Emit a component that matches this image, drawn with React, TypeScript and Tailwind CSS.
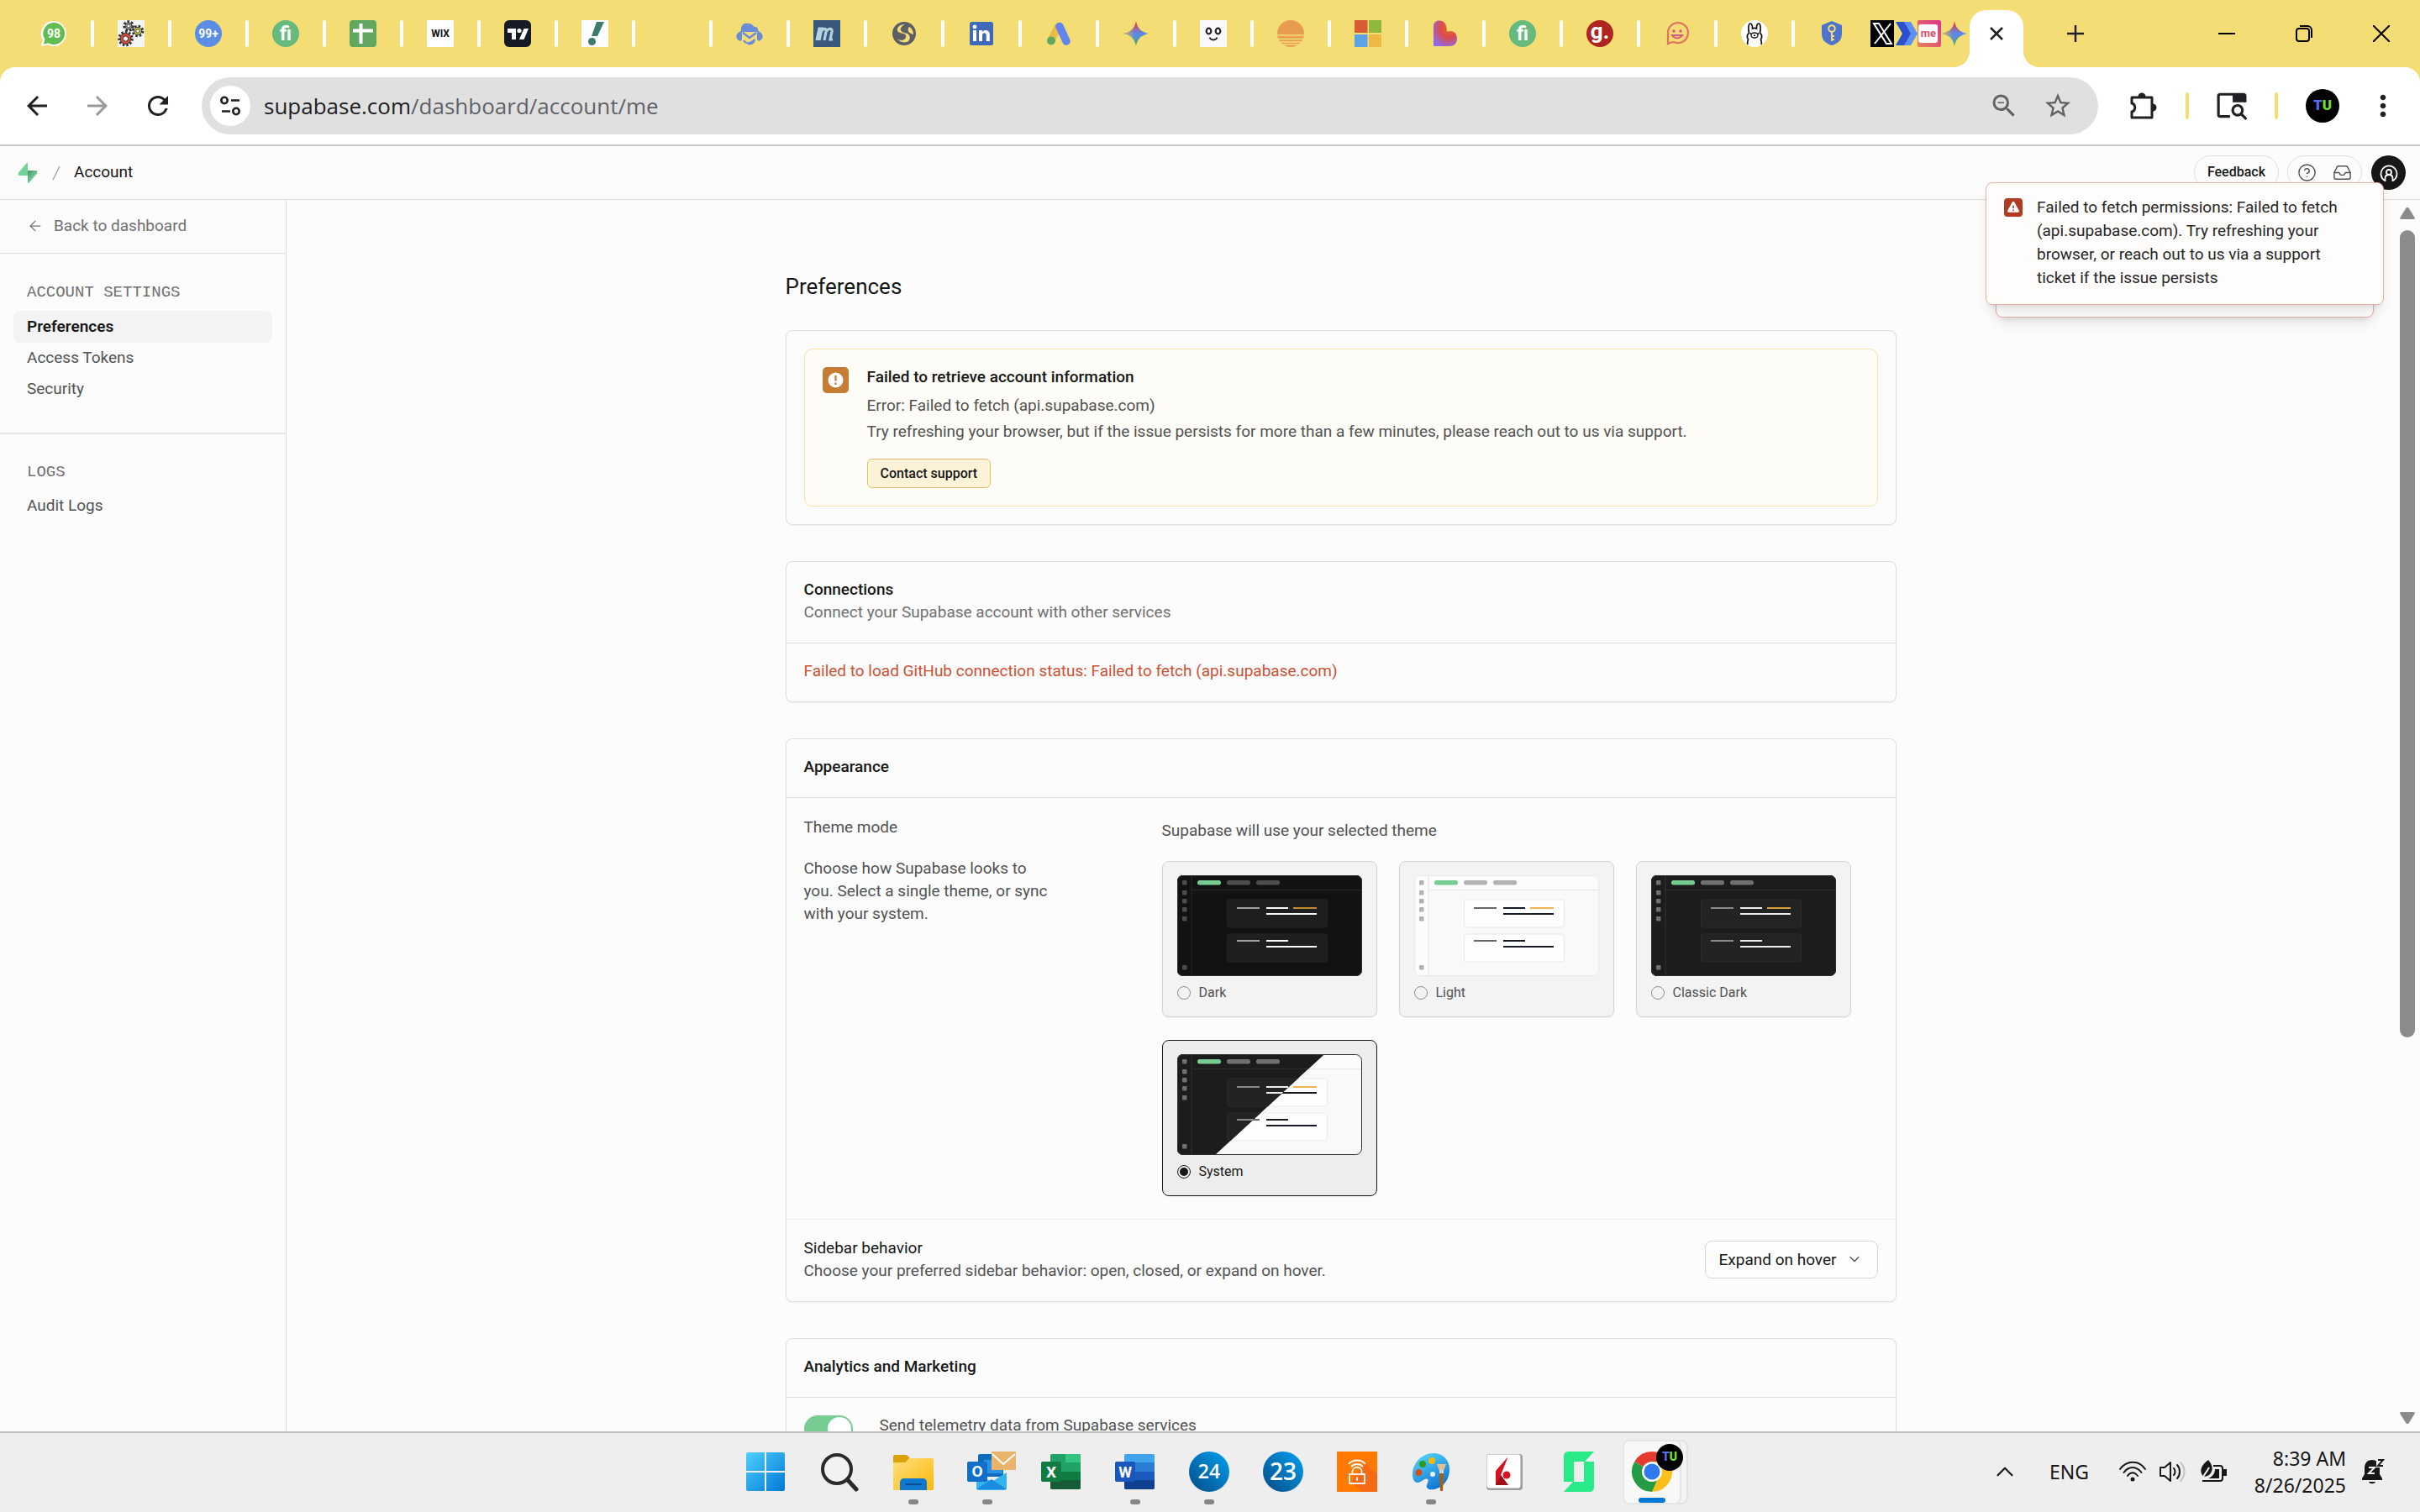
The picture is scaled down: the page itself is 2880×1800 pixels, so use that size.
import type { ReactNode } from "react";
import { ArrowLeft, ChevronDown, ChevronUp, HelpCircle, Inbox } from "lucide-react";
import {
  MdArrowBack,
  MdArrowForward,
  MdMoreVert,
  MdRefresh,
  MdStarOutline,
  MdZoomOut,
} from "react-icons/md";

/* ---------- tab favicons ---------- */

const Fav = ({ children }: { children?: ReactNode }) => (
  <svg viewBox="0 0 32 32" className="size-8 shrink-0" aria-hidden="true">
    {children}
  </svg>
);

const SvgText = ({ x = 16, y, size, fill = "#fff", children }: { x?: number; y: number; size: number; fill?: string; children: string }) => (
  <text x={x} y={y} fontSize={size} fill={fill} textAnchor="middle" fontFamily="Roboto" fontWeight="700">
    {children}
  </text>
);

const Gear = ({ cx, cy, r, fill }: { cx: number; cy: number; r: number; fill: string }) => (
  <g>
    <circle cx={cx} cy={cy} r={r} fill="none" stroke="#333" strokeWidth="3.5" strokeDasharray="2.4 1.9" />
    <circle cx={cx} cy={cy} r={r - 1} fill={fill} stroke="#333" strokeWidth="1" />
    <circle cx={cx} cy={cy} r={r / 2.4} fill="#f5f5f5" stroke="#333" strokeWidth="1" />
  </g>
);

const Fi = () => (
  <Fav>
    <circle cx="16" cy="16" r="16" fill="#66bb7c" />
    <SvgText x={16} y={24} size={23}>fi</SvgText>
  </Fav>
);

const Spark = () => (
  <Fav>
    <defs>
      <linearGradient id="spark" x1="0" y1="0" x2="0" y2="1">
        <stop offset="0.1" stopColor="#e0453f" />
        <stop offset="0.5" stopColor="#5b86f0" />
        <stop offset="1" stopColor="#4fae5f" />
      </linearGradient>
      <linearGradient id="sparkLeft" x1="0" y1="0" x2="1" y2="0">
        <stop offset="0" stopColor="#e5b93c" />
        <stop offset="0.45" stopColor="#e5b93c" stopOpacity="0" />
      </linearGradient>
    </defs>
    <path d="M16 1c1.500 8.500 6 13.200 15 15-9 1.800-13.500 6.500-15 15-1.500-8.500-6-13.200-15-15 9-1.800 13.500-6.500 15-15z" fill="url(#spark)" />
    <path d="M16 1c1.500 8.500 6 13.200 15 15-9 1.800-13.500 6.500-15 15-1.500-8.500-6-13.200-15-15 9-1.800 13.500-6.500 15-15z" fill="url(#sparkLeft)" />
  </Fav>
);

const tabs: { title: string; icon: ReactNode }[] = [
  {
    title: "WhatsApp",
    icon: (
      <Fav>
        <path d="M16 1a15 15 0 1 1-7 28.300L1 31l1.800-7.500A15 15 0 0 1 16 1z" fill="#fff" />
        <path d="M16 3a13 13 0 1 1-6.500 24.200L4 28.500l1.400-5.500A13 13 0 0 1 16 3z" fill="#61bd52" />
        <SvgText y={21} size={14}>98</SvgText>
      </Fav>
    ),
  },
  {
    title: "Gears",
    icon: (
      <Fav>
        <rect width="32" height="32" fill="#f5f5f5" />
        <Gear cx={13} cy={7} r={5} fill="#bbb" />
        <Gear cx={24} cy={13} r={5.500} fill="#e3dd4c" />
        <Gear cx={9.500} cy={22} r={7.500} fill="#d9483b" />
      </Fav>
    ),
  },
  {
    title: "Inbox",
    icon: (
      <Fav>
        <circle cx="16" cy="16" r="16" fill="#5b8de6" />
        <SvgText y={21} size={14}>99+</SvgText>
      </Fav>
    ),
  },
  { title: "Fiverr", icon: <Fi /> },
  {
    title: "Sheet",
    icon: (
      <Fav>
        <rect width="32" height="32" rx="4" fill="#62a75f" />
        <path d="M13.500 4v24M4 12.500h24" stroke="#fff" strokeWidth="4" />
      </Fav>
    ),
  },
  {
    title: "Wix",
    icon: (
      <Fav>
        <rect width="32" height="32" fill="#fff" />
        <SvgText y={20} size={12} fill="#111">WIX</SvgText>
      </Fav>
    ),
  },
  {
    title: "TradingView",
    icon: (
      <Fav>
        <rect width="32" height="32" rx="6" fill="#151a24" />
        <path d="M4 10h10v13H9v-8H4zM23.500 10H29l-5.500 13H18z" fill="#fff" />
        <circle cx="18" cy="12.500" r="2.600" fill="#fff" />
      </Fav>
    ),
  },
  {
    title: "Notice",
    icon: (
      <Fav>
        <rect width="32" height="32" fill="#fff" />
        <path d="M18 2h9l-8 17h-7z" fill="#3d7b70" />
        <circle cx="12.500" cy="25.500" r="4.500" fill="#3d7b70" />
      </Fav>
    ),
  },
  { title: "Blank", icon: <Fav /> },
  {
    title: "Mail assistant",
    icon: (
      <Fav>
        <path d="M6 13C5 7 9 3 13 4c5-1 7 3 9 4 4 0 5 3 4 5z" fill="#6a8dd9" />
        <path d="M7 12v11l-2 2c-6-2-6-9-1-11zM25 12v11l2 2c6-2 6-9 1-11z" fill="#6a8dd9" />
        <path d="M8 15l8 6 8-6" fill="none" stroke="#6a8dd9" strokeWidth="2.500" />
        <path d="M7 13h18" stroke="#6a8dd9" strokeWidth="2" />
        <path d="M9 24c3 5 9 4 13-1-1 4-4 6-8 5" fill="none" stroke="#6a8dd9" strokeWidth="2.200" />
      </Fav>
    ),
  },
  {
    title: "Moz",
    icon: (
      <Fav>
        <rect width="32" height="32" fill="#3a587c" />
        <path d="M4 24l3-14h3l-3 14m2-10c3-5 7-5 6 0l-2 10m2-10c3-5 8-5 7 0l-2 9h3" fill="none" stroke="#b5d3dd" strokeWidth="3.200" />
      </Fav>
    ),
  },
  {
    title: "Swirl",
    icon: (
      <Fav>
        <circle cx="16" cy="16" r="14" fill="#5c6064" />
        <path d="M17 5c-8 0-11 6-8 9 2 2 8 1 9 4s-2 6-5 6c-2 0-4-1-5-2 2 4 9 6 13 3 3-3 2-7-1-9-3-1-7-1-8-4-1-2 1-5 5-7zM22 8c4 2 5 6 5 9-2-1-5-1-6-4-1-2 0-4 1-5z" fill="#f4dd75" />
      </Fav>
    ),
  },
  {
    title: "LinkedIn",
    icon: (
      <Fav>
        <rect x="2" y="2" width="28" height="28" rx="2.500" fill="#4169ba" />
        <path d="M6 12h4v13H6zM13 12h3.800v2c2-3.300 9-3 9 3v8h-4v-7c0-4-4.800-3.500-4.800 0v7h-4z" fill="#fff" />
        <circle cx="8" cy="8" r="2.400" fill="#fff" />
      </Fav>
    ),
  },
  {
    title: "Google Ads",
    icon: (
      <Fav>
        <path d="M7 24 15 8" stroke="#e8bd43" strokeWidth="9" strokeLinecap="round" />
        <path d="M17 7.500 25 25" stroke="#6085ec" strokeWidth="9.500" strokeLinecap="round" />
        <circle cx="7" cy="24.500" r="5" fill="#62a75f" />
      </Fav>
    ),
  },
  { title: "Gemini", icon: <Spark /> },
  {
    title: "Face",
    icon: (
      <Fav>
        <rect width="32" height="32" fill="#fafafa" />
        <ellipse cx="10.500" cy="13" rx="2.800" ry="3.300" fill="#fff" stroke="#222" strokeWidth="2.200" />
        <ellipse cx="21.500" cy="13" rx="2.800" ry="3.300" fill="#fff" stroke="#222" strokeWidth="2.200" />
        <path d="M11.500 20.500c1.500 4 7.500 4 9 0" fill="none" stroke="#222" strokeWidth="1.800" />
      </Fav>
    ),
  },
  {
    title: "Sunset",
    icon: (
      <Fav>
        <circle cx="16" cy="16" r="16" fill="#e89c4f" />
        <path d="M0 18h32M0 22.500h32M0 26h32M4 29h24" stroke="#f4dd75" strokeWidth="1.600" />
      </Fav>
    ),
  },
  {
    title: "Microsoft",
    icon: (
      <Fav>
        <rect width="15.500" height="15" fill="#d95c33" />
        <rect x="17" width="15" height="15" fill="#8fb83d" />
        <rect y="17" width="15.500" height="15" fill="#5ba3e6" />
        <rect x="17" y="17" width="15" height="15" fill="#edb944" />
      </Fav>
    ),
  },
  {
    title: "Blob",
    icon: (
      <Fav>
        <defs>
          <radialGradient id="blob" cx="0.650" cy="0.300" r="0.800">
            <stop offset="0" stopColor="#e2702c" />
            <stop offset="0.450" stopColor="#dc4a4a" />
            <stop offset="1" stopColor="#8a6cf0" />
          </radialGradient>
        </defs>
        <path d="M2 31V7C2 3 5 .5 8.500.5c6 0 9.500 4 9.500 13 6-2 12 1 12 8.500 0 6-4 9-9 9z" fill="url(#blob)" />
      </Fav>
    ),
  },
  { title: "Fiverr inbox", icon: <Fi /> },
  {
    title: "Goodreads",
    icon: (
      <Fav>
        <circle cx="16" cy="16" r="16" fill="#ad2420" />
        <SvgText y={22} size={26}>g.</SvgText>
      </Fav>
    ),
  },
  {
    title: "Chat",
    icon: (
      <Fav>
        <path d="M5 28V16a12 12 0 1 1 7 10c-2 0-5 1-7 2z" fill="none" stroke="#e0745e" strokeWidth="2.200" />
        <circle cx="12" cy="13" r="1.800" fill="#d9597c" />
        <circle cx="20" cy="13" r="1.800" fill="#d9597c" />
        <path d="M10 18c3 4.500 9 4.500 12 0z" fill="none" stroke="#d9597c" strokeWidth="2" />
      </Fav>
    ),
  },
  {
    title: "Ollama",
    icon: (
      <Fav>
        <circle cx="16" cy="16" r="16" fill="#fff" />
        <path d="M8 29c-1-3 0-4 .5-6-2-3-1-6 1-8-1-4-1-11 1.500-11 2 0 2.500 3 2.500 6 2-1 3-1 5 0 0-3 .5-6 2.500-6 2.500 0 2.500 7 1.500 11 2 2 3 5 1 8 .5 2 1.500 3 .5 6" fill="none" stroke="#111" strokeWidth="1.700" />
        <ellipse cx="16" cy="18" rx="4" ry="3" fill="none" stroke="#111" strokeWidth="1.300" />
        <circle cx="11.500" cy="16" r="1" />
        <circle cx="20.500" cy="16" r="1" />
        <path d="M15 17.500h2v1.500h-2z" />
      </Fav>
    ),
  },
  {
    title: "Vault",
    icon: (
      <Fav>
        <path d="M16 1l12 5v10c0 8-5 12-12 14C9 28 4 24 4 16V6z" fill="#4d73cd" />
        <circle cx="16" cy="10" r="3.800" fill="none" stroke="#f4dd75" strokeWidth="2" />
        <path d="M16 14v11M16 19h3M16 23h3" stroke="#f4dd75" strokeWidth="2" />
      </Fav>
    ),
  },
];

/* ---------- browser chrome ---------- */

const TabStrip = () => (
  <div className="flex h-20 items-center pl-5">
    {tabs.map((tab, i) => (
      <div key={tab.title} className="flex h-8 shrink-0 items-center">
        <button type="button" aria-label={tab.title} className="flex w-[88px] justify-center">
          {tab.icon}
        </button>
        {i < tabs.length - 1 && <span className="h-8 w-1 rounded-sm bg-white" />}
      </div>
    ))}
    <div className="flex h-8 w-[120px] items-center pl-[2px]">
      <div className="w-7 overflow-hidden">
        <Fav>
          <rect width="32" height="32" fill="#000" />
          <path d="M4 4h6l15 24h-6zM24 4 5 28" fill="none" stroke="#fff" strokeWidth="2" />
        </Fav>
      </div>
      <div className="w-7 overflow-hidden">
        <Fav>
          <path d="M2 2h16l8 14-8 14H2l8-14z" fill="#2c50cf" />
          <path d="M12 2h8l8 14-8 14h-8l8-14z" fill="#5d8ef2" />
        </Fav>
      </div>
      <div className="w-7 overflow-hidden">
        <Fav>
          <defs>
            <linearGradient id="pink" x1="1" y1="0" x2="0" y2="1">
              <stop offset="0" stopColor="#dc3489" />
              <stop offset="1" stopColor="#e58257" />
            </linearGradient>
          </defs>
          <rect width="28" height="32" rx="2" fill="url(#pink)" />
          <rect x="1" y="5" width="23" height="22" rx="3" fill="#fff" />
          <SvgText x={13} y={20} size={13} fill="#d9536b">me</SvgText>
        </Fav>
      </div>
      <Spark />
    </div>
    <div className="relative flex h-[68px] w-16 items-center justify-center self-end rounded-t-[20px] bg-white pb-3">
      <svg viewBox="0 0 20 20" className="absolute bottom-0 -left-5 size-5" aria-hidden="true">
        <path d="M20 0v20H0C12 20 20 12 20 0z" fill="#fff" />
      </svg>
      <svg viewBox="0 0 20 20" className="absolute -right-5 bottom-0 size-5" aria-hidden="true">
        <path d="M0 0v20h20C8 20 0 12 0 0z" fill="#fff" />
      </svg>
      <button type="button" aria-label="Close tab">
        <svg viewBox="0 0 16 16" className="size-4" stroke="#202124" strokeWidth="2.500">
          <path d="M1 1l14 14M15 1 1 15" />
        </svg>
      </button>
    </div>
    <button type="button" aria-label="New tab" className="ml-[52px]">
      <svg viewBox="0 0 20 20" className="size-5" stroke="#202124" strokeWidth="2.500">
        <path d="M10 0v20M0 10h20" />
      </svg>
    </button>
    <div className="ml-auto flex">
      <button type="button" aria-label="Minimize" className="flex w-[92px] justify-center">
        <svg viewBox="0 0 20 20" className="size-5" stroke="#000" strokeWidth="2">
          <path d="M0 10h20" />
        </svg>
      </button>
      <button type="button" aria-label="Restore" className="flex w-[92px] justify-center">
        <svg viewBox="0 0 20 20" className="size-5" fill="none" stroke="#000" strokeWidth="2">
          <rect x="1" y="4" width="15" height="15" rx="3" />
          <path d="M5 1h9a5 5 0 0 1 5 5v9" />
        </svg>
      </button>
      <button type="button" aria-label="Close" className="flex w-[92px] justify-center">
        <svg viewBox="0 0 20 20" className="size-5" stroke="#000" strokeWidth="2">
          <path d="M0 0l20 20M20 0 0 20" />
        </svg>
      </button>
    </div>
  </div>
);

const TuBadge = ({ className }: { className: string }) => (
  <span className={`flex items-center justify-center rounded-full bg-black font-black ${className}`}>
    <span className="text-[#5b6cf0]">T</span>
    <span className="text-[#6fe02f]">U</span>
  </span>
);

const Toolbar = () => (
  <div className="flex h-[94px] items-center rounded-t-[18px] border-b-2 border-[#cbcbcb] bg-white pl-2 text-[#202124]">
    <button type="button" aria-label="Back" className="flex w-[72px] justify-center">
      <MdArrowBack className="size-9" />
    </button>
    <button type="button" aria-label="Forward" className="flex w-[72px] justify-center text-[#9a9a9a]">
      <MdArrowForward className="size-9" />
    </button>
    <button type="button" aria-label="Reload" className="flex w-[72px] justify-center">
      <MdRefresh className="size-9" />
    </button>
    <div className="ml-4 flex h-[68px] min-w-0 flex-1 items-center rounded-full bg-[#e0e0e0] pr-4 pl-[10px] text-[#5f6368]">
      <button type="button" aria-label="Site information" className="flex size-12 items-center justify-center rounded-full bg-white">
        <svg viewBox="0 0 24 24" className="size-6" fill="none" stroke="#202124" strokeWidth="2.600">
          <circle cx="5" cy="5.500" r="3.700" />
          <path d="M13 5.500h10M2 18.500h10" />
          <circle cx="19" cy="18.500" r="3.700" />
        </svg>
      </button>
      <a href="#me" className="ml-4 flex-1 font-['Open_Sans',sans-serif] text-[26px] leading-9 text-[#5f6368]">
        <span className="text-[#202124]">supabase.com</span>/dashboard/account/me
      </a>
      <button type="button" aria-label="Zoom" className="flex w-16 justify-center">
        <MdZoomOut className="size-9 text-[#5f6368]" />
      </button>
      <button type="button" aria-label="Bookmark this tab" className="flex w-16 justify-center">
        <MdStarOutline className="size-9" />
      </button>
    </div>
    <button type="button" aria-label="Extensions" className="ml-[17px] flex w-[72px] justify-center">
      <svg viewBox="0 0 36 36" className="size-9" fill="none" stroke="#202124" strokeWidth="3" strokeLinejoin="round">
        <path d="M5 8h24v24H5v-7c5-1 5-9 0-10z" />
        <path d="M12.500 7a4.500 4.500 0 0 1 9 0zM30 15.500a4.500 4.500 0 0 1 0 9z" fill="#202124" stroke="none" />
      </svg>
    </button>
    <span className="mx-[15px] h-8 w-1 rounded-sm bg-[#f4dd75]" />
    <button type="button" aria-label="Search tabs" className="flex w-[72px] justify-center">
      <svg viewBox="0 0 34 34" className="size-9" fill="none" stroke="#202124" strokeWidth="3">
        <path d="M15 29H4a2 2 0 0 1-2-2V6a2 2 0 0 1 2-2h26a2 2 0 0 1 2 2v7" />
        <path d="M18 4h14v9H18z" fill="#202124" stroke="none" />
        <circle cx="23.500" cy="22" r="5.500" />
        <path d="m27.500 26 6 6" />
      </svg>
    </button>
    <span className="mx-[15px] h-8 w-1 rounded-sm bg-[#f4dd75]" />
    <button type="button" aria-label="Profile" className="ml-[18px]">
      <TuBadge className="size-10 text-[17px]" />
    </button>
    <button type="button" aria-label="Menu" className="mr-5 ml-7 flex w-12 justify-center">
      <MdMoreVert className="size-10" />
    </button>
  </div>
);

/* ---------- dashboard ---------- */

const DashboardHeader = () => (
  <header className="flex h-16 shrink-0 items-center border-b border-[#dfdfdf] pr-[17px] pl-[21px]">
    <svg viewBox="0 0 24 24" className="size-6" aria-label="Supabase">
      <defs>
        <linearGradient id="bolt" x1="0" y1="0" x2="1" y2="1">
          <stop offset="0" stopColor="#4e8f66" />
          <stop offset="0.600" stopColor="#72cf95" />
        </linearGradient>
      </defs>
      <path d="M12 0v15H2.500C.5 15 0 13 1 11.500L10.500.5C11 0 12 0 12 0z" fill="#74d097" />
      <path d="M12 9h9.500c2 0 2.500 2 1.500 3.500l-9.500 11C13 24 12 24 12 23.500z" fill="url(#bolt)" />
    </svg>
    <svg viewBox="0 0 12 18" className="ml-4 h-[18px] w-3" stroke="#a8a8a8" strokeWidth="1.500" aria-hidden="true">
      <path d="M10 1 2 17" />
    </svg>
    <a href="#account" className="ml-[15px] pb-[3px] text-[19px] leading-[27px] text-[#171717]">Account</a>
    <div className="ml-auto flex items-start">
      <button type="button" className="mr-[10px] h-10 rounded-full border border-[#dfdfdf] px-[15px] text-[16px] font-medium text-[#171717]">Feedback</button>
      <div className="mr-[11px] flex h-10 items-center gap-[19px] rounded-full border border-[#dfdfdf] px-[11px] text-[#525252]">
        <button type="button" aria-label="Help">
          <HelpCircle size={23} strokeWidth={1.5} />
        </button>
        <button type="button" aria-label="Inbox">
          <Inbox size={23} strokeWidth={1.5} />
        </button>
      </div>
      <button type="button" aria-label="User menu" className="flex size-[41px] items-center justify-center rounded-full bg-[#171717]">
        <svg viewBox="0 0 22 22" className="size-[22px]" fill="none" stroke="#fff" strokeWidth="1.800">
          <path d="M6 20a9.500 9.500 0 1 1 10 0" />
          <circle cx="11" cy="10" r="3" />
          <path d="M6.500 21v-3.500c0-3 2-4.500 4.500-4.500s4.500 1.500 4.500 4.500V21" />
        </svg>
      </button>
    </div>
  </header>
);

const settingsLinks = ["Preferences", "Access Tokens", "Security"];

const Sidebar = () => (
  <aside className="w-[341px] shrink-0 border-r border-[#dfdfdf] text-[19px] leading-[27px] text-[#525252]">
    <a href="#dashboard" className="flex h-16 items-center gap-3 border-b border-[#dfdfdf] pb-[2px] pl-8 text-[#707070]">
      <ArrowLeft size={20} strokeWidth={1.5} />
      Back to dashboard
    </a>
    <nav className="px-4 pt-[33px] pb-[33px]">
      <h2 className="px-4 font-['Liberation_Mono',monospace] text-[19px] text-[#707070]">ACCOUNT SETTINGS</h2>
      <ul className="mt-2">
        {settingsLinks.map((link) => (
          <li key={link}>
            {link === "Preferences" ? (
              <a href="#preferences" aria-current="page" className="block rounded-lg bg-[#f3f3f3] px-4 pt-[5px] pb-[6px] font-semibold text-[#171717]">{link}</a>
            ) : (
              <a href={`#${link}`} className="block px-4 pt-1 pb-[6px]">{link}</a>
            )}
          </li>
        ))}
      </ul>
    </nav>
    <nav className="border-t-2 border-[#e6e6e6] px-8 pt-8">
      <h2 className="font-['Liberation_Mono',monospace] text-[19px] text-[#707070]">LOGS</h2>
      <a href="#audit" className="mt-3 block">Audit Logs</a>
    </nav>
  </aside>
);

type Palette = {
  bg: string;
  side: string;
  line: string;
  dot: string;
  card: string;
  muted: string;
  text: string;
  accent: string;
};

const palettes: Record<string, Palette> = {
  dark: { bg: "#121212", side: "#121212", line: "#242424", dot: "#4d4d4d", card: "#1f1f1f", muted: "#a0a0a0", text: "#fafafa", accent: "#c68a2b" },
  light: { bg: "#f8f9fb", side: "#fcfcfc", line: "#e8e9eb", dot: "#b2b2b2", card: "#fdfdfd", muted: "#666666", text: "#171c24", accent: "#eeb54e" },
  classic: { bg: "#1c1c1c", side: "#1c1c1c", line: "#2b2b2b", dot: "#707070", card: "#232323", muted: "#8a8a8a", text: "#ededed", accent: "#d9a036" },
};

const PreviewScene = ({ p }: { p: Palette }) => (
  <g>
    <rect width="220" height="120" fill={p.bg} />
    <rect width="17" height="120" fill={p.side} />
    <rect width="220" height="17" fill={p.side} />
    <path d="M17 0v120M17 17.500h203" stroke={p.line} strokeWidth="1.500" />
    {[6, 18, 28, 38, 49, 107].map((y) => (
      <rect key={y} x="6" y={y} width="5.500" height="5.500" rx="1" fill={p.dot} />
    ))}
    <rect x="24" y="6" width="28" height="5.500" rx="2.500" fill="#76cc93" />
    <rect x="59" y="6" width="28" height="5.500" rx="2.500" fill={p.dot} />
    <rect x="94" y="6" width="28" height="5.500" rx="2.500" fill={p.dot} />
    <rect x="59.500" y="29" width="119" height="33" rx="3" fill={p.card} stroke={p.line} />
    <rect x="59.500" y="70" width="119" height="33" rx="3" fill={p.card} stroke={p.line} />
    <path d="M71 39h27M71 78h27" stroke={p.muted} strokeWidth="2" />
    <path d="M106 39h26M106 46h60M106 78h26M106 85h60" stroke={p.text} strokeWidth="2" />
    <path d="M138 39h28" stroke={p.accent} strokeWidth="2" />
  </g>
);

const ThemePreview = ({ mode }: { mode: string }) => (
  <svg viewBox="0 0 220 120" className="block h-[120px] w-[220px]" aria-hidden="true">
    <defs>
      <clipPath id={`frame-${mode}`}>
        <rect width="220" height="120" rx="7" />
      </clipPath>
      <clipPath id={`half-${mode}`}>
        <path d="M0 0h175L45 120H0z" />
      </clipPath>
    </defs>
    <g clipPath={`url(#frame-${mode})`}>
      <PreviewScene p={mode === "system" ? palettes.light : palettes[mode]} />
      {mode === "system" && (
        <g clipPath="url(#half-system)">
          <PreviewScene p={palettes.classic} />
        </g>
      )}
    </g>
    <rect x="0.500" y="0.500" width="219" height="119" rx="7" fill="none" stroke={mode === "light" ? "#e6e8eb" : "#2e2e2e"} />
  </svg>
);

const themes = [
  { id: "dark", label: "Dark" },
  { id: "light", label: "Light" },
  { id: "classic", label: "Classic Dark" },
  { id: "system", label: "System" },
];

const Card = ({ title, description, children }: { title?: string; description?: string; children: ReactNode }) => (
  <section className="rounded-lg border border-[#dfdfdf] bg-[#fcfcfc] shadow-xs">
    {title && (
      <div className="border-b border-[#dfdfdf] px-[21px] pt-[19px] pb-[23px]">
        <h2 className="font-medium text-[#171717]">{title}</h2>
        {description && <p className="text-[#707070]">{description}</p>}
      </div>
    )}
    {children}
  </section>
);

const Preferences = () => (
  <main className="min-w-0 flex-1 px-8 pt-[85px]">
    <div className="mx-auto flex max-w-[1322px] flex-col gap-[43px] text-[19px] leading-[27px] text-[#525252]">
      <h1 className="-mb-[9px] text-[26px] leading-9 text-[#171717]">Preferences</h1>

      <Card>
        <div className="p-[21px]">
          <div role="alert" className="flex items-start gap-[22px] rounded-[10px] border border-[#f8e2ab] bg-[#fdfcf6] p-[21px]">
            <svg viewBox="0 0 31 31" className="size-[31px] shrink-0" aria-hidden="true">
              <rect width="31" height="31" rx="5" fill="#c67d33" />
              <circle cx="15.500" cy="15.500" r="9" fill="#fff" />
              <path d="M15.500 10v6.500M15.500 18.500v2.500" stroke="#c67d33" strokeWidth="2.200" />
            </svg>
            <div>
              <h3 className="leading-6 font-medium text-[#171717]">Failed to retrieve account information</h3>
              <p className="mt-[6px] leading-[31px]">Error: Failed to fetch (api.supabase.com)</p>
              <p className="leading-[31px]">
                Try refreshing your browser, but if the issue persists for more than a few minutes, please reach out to us via support.
              </p>
              <button type="button" className="mt-[17px] block h-[35px] rounded-md border border-[#e6bd6c] bg-[#fbf2d8] px-[15px] text-[16px] font-medium text-[#171717]">
                Contact support
              </button>
            </div>
          </div>
        </div>
      </Card>

      <Card title="Connections" description="Connect your Supabase account with other services">
        <p className="px-[21px] pt-[19px] pb-[23px] text-[#cf4f33]">Failed to load GitHub connection status: Failed to fetch (api.supabase.com)</p>
      </Card>

      <Card title="Appearance">
        <div className="flex border-b border-[#ededed] px-[21px] pt-[21px] pb-[27px]">
          <div className="w-[426px] shrink-0">
            <h3>Theme mode</h3>
            <p className="mt-[22px] w-[300px]">
              Choose how Supabase looks to you. Select a single theme, or sync with your system.
            </p>
          </div>
          <fieldset className="pt-1">
            <legend className="contents">Supabase will use your selected theme</legend>
            <div className="mt-[23px] grid grid-cols-3 gap-x-[26px] gap-y-[27px]">
              {themes.map((theme) => (
                <label
                  key={theme.id}
                  className="block w-64 rounded-lg border border-[#d4d4d4] bg-[#f3f3f3] px-[17px] py-4 text-[16px] leading-6 shadow-xs has-checked:border-[#171717] has-checked:bg-[#ededed] has-checked:text-[#171717]"
                >
                  <ThemePreview mode={theme.id} />
                  <span className="mt-[8px] flex items-center gap-[10px]">
                    <input
                      type="radio"
                      name="theme"
                      value={theme.id}
                      defaultChecked={theme.id === "system"}
                      className="size-4 appearance-none rounded-full border border-[#8f8f8f] checked:border-[#171717] checked:bg-[#171717] checked:bg-clip-content checked:p-[2px]"
                    />
                    {theme.label}
                  </span>
                </label>
              ))}
            </div>
          </fieldset>
        </div>
        <div className="flex items-center justify-between px-[21px] pt-5 pb-[23px]">
          <label htmlFor="sidebar-behavior">
            <span className="block text-[#171717]">Sidebar behavior</span>
            Choose your preferred sidebar behavior: open, closed, or expand on hover.
          </label>
          <div className="relative">
            <select id="sidebar-behavior" className="h-[45px] w-[206px] appearance-none rounded-lg border border-[#d4d4d4] bg-[#fdfdfd] pl-4 text-[#171717]">
              <option>Expand on hover</option>
              <option>Expanded</option>
              <option>Collapsed</option>
            </select>
            <ChevronDown size={20} strokeWidth={1.5} className="pointer-events-none absolute top-3 right-[18px]" />
          </div>
        </div>
      </Card>

      <Card title="Analytics and Marketing">
        <div className="flex items-start gap-8 px-[21px] pt-[21px] pb-[22px]">
          <input
            id="telemetry"
            type="checkbox"
            role="switch"
            defaultChecked
            className="h-8 w-[58px] appearance-none rounded-full bg-[#76cc93] before:mt-[2px] before:ml-7 before:block before:size-7 before:rounded-full before:bg-white"
          />
          <label htmlFor="telemetry" className="leading-6">Send telemetry data from Supabase services</label>
        </div>
      </Card>
    </div>
  </main>
);

const ScrollBar = () => (
  <div className="flex w-[30px] shrink-0 flex-col items-center justify-between py-[9px]">
    <div className="flex flex-1 flex-col items-center">
      <svg viewBox="0 0 18 14" className="h-[14px] w-[18px]" fill="#8b8b8b">
        <path d="M9 0c1 0 1.500.5 2 1.300l6.500 10.500c.7 1.200 0 2.200-1.200 2.200H1.700C.5 14-.2 13 .5 11.800L7 1.300C7.500.5 8 0 9 0z" />
      </svg>
      <div className="mt-[13px] h-[67%] w-[18px] rounded-full bg-[#8b8b8b]" />
    </div>
    <svg viewBox="0 0 18 14" className="h-[14px] w-[18px]" fill="#8b8b8b">
      <path d="M9 14c1 0 1.500-.5 2-1.300l6.500-10.500C18.200 1 17.500 0 16.300 0H1.700C.5 0-.2 1 .5 2.200L7 12.700c.5.8 1 1.300 2 1.300z" />
    </svg>
  </div>
);

const Toast = () => (
  <div className="absolute top-[43px] right-[43px] w-[474px]">
    <div className="absolute inset-x-3 top-4 -bottom-[15px] rounded-lg border border-[#e9b0a4] bg-[#fffcfc] shadow-lg" />
    <div role="alert" className="relative flex gap-[17px] rounded-lg border border-[#e9b0a4] bg-[#fffcfc] px-[21px] pt-[15px] pb-[17px] text-[19px] leading-7 text-[#262626] shadow-lg">
      <svg viewBox="0 0 22 22" className="mt-[3px] size-[22px] shrink-0" aria-hidden="true">
        <rect width="22" height="22" rx="4" fill="#b03a22" />
        <path d="M9.800 4.500a1.400 1.400 0 0 1 2.400 0l5.600 10.300c.5 1-.1 2-1.200 2H5.400c-1.100 0-1.700-1-1.200-2z" fill="#fff" />
        <path d="M11 8.500v3.500M11 13.500v1.700" stroke="#b03a22" strokeWidth="1.600" />
      </svg>
      <p className="w-[365px]">
        Failed to fetch permissions: Failed to fetch (api.supabase.com). Try refreshing your browser, or reach out to us via a support ticket if the issue persists
      </p>
    </div>
  </div>
);

/* ---------- taskbar ---------- */

const AppIcon = ({ children }: { children: ReactNode }) => (
  <svg viewBox="0 0 48 48" className="size-12 overflow-visible" aria-hidden="true">
    {children}
  </svg>
);

const apps: { name: string; running?: boolean; active?: boolean; icon: ReactNode }[] = [
  {
    name: "Start",
    icon: (
      <AppIcon>
        <defs>
          <linearGradient id="win" x1="0" y1="0" x2="1" y2="1" gradientUnits="objectBoundingBox">
            <stop offset="0" stopColor="#4fd0ff" />
            <stop offset="1" stopColor="#0078d4" />
          </linearGradient>
        </defs>
        <path d="M3 1h20v22H1V3a2 2 0 0 1 2-2zM25 1h20a2 2 0 0 1 2 2v20H25zM1 25h22v22H3a2 2 0 0 1-2-2zM25 25h22v20a2 2 0 0 1-2 2H25z" fill="url(#win)" />
      </AppIcon>
    ),
  },
  {
    name: "Search",
    icon: (
      <AppIcon>
        <circle cx="21" cy="21" r="17" fill="#f2f2f2" stroke="#2a2a2a" strokeWidth="4" />
        <path d="m34 34 10 11" stroke="#2a2a2a" strokeWidth="5" strokeLinecap="round" />
      </AppIcon>
    ),
  },
  {
    name: "File Explorer",
    running: true,
    icon: (
      <AppIcon>
        <defs>
          <linearGradient id="folder" x1="0" y1="0" x2="1" y2="1">
            <stop offset="0" stopColor="#ffe07d" />
            <stop offset="1" stopColor="#fbb80a" />
          </linearGradient>
        </defs>
        <path d="M0 6c0-1 1-2 2-2h14l5 5v6H0z" fill="#dda006" />
        <path d="M0 13h14l5-5h27c1 0 2 1 2 2v34c0 1-1 2-2 2H2c-1 0-2-1-2-2z" fill="url(#folder)" />
        <path d="M8 46V37c0-3 2-5 5-5h22c3 0 5 2 5 5v9z" fill="#1178cf" />
        <path d="M15 39h18" stroke="#0a4f93" strokeWidth="2" strokeLinecap="round" />
      </AppIcon>
    ),
  },
  {
    name: "Outlook",
    running: true,
    icon: (
      <AppIcon>
        <rect x="13" y="3" width="30" height="27" rx="2" fill="#0f6cbd" />
        <path d="M20 10h22v16H20z" fill="#2a93e6" />
        <path d="M11 26l18 10 18-11v18a3 3 0 0 1-3 3H14a3 3 0 0 1-3-3z" fill="#35b3f1" />
        <path d="M11 45l18-12 18 12z" fill="#1b8be0" />
        <rect y="12" width="24" height="24" rx="2" fill="#0f6fc9" />
        <SvgText x={12} y={30} size={19}>O</SvgText>
        <rect x="29" width="29" height="22" fill="#e9b46c" />
        <path d="m30 3 13 12L57 3" fill="none" stroke="#fff" strokeWidth="2" />
      </AppIcon>
    ),
  },
  {
    name: "Excel",
    icon: (
      <AppIcon>
        <rect x="11" y="3" width="36" height="42" rx="2" fill="#21a366" />
        <path d="M29 3h16a2 2 0 0 1 2 2v8H29z" fill="#33c481" />
        <path d="M11 24h36v10H11z" fill="#107c41" />
        <path d="M11 34h36v9a2 2 0 0 1-2 2H13a2 2 0 0 1-2-2z" fill="#185c37" />
        <rect y="12" width="24" height="24" rx="2" fill="#107c41" />
        <SvgText x={12} y={31} size={19}>X</SvgText>
      </AppIcon>
    ),
  },
  {
    name: "Word",
    running: true,
    icon: (
      <AppIcon>
        <rect x="11" y="3" width="36" height="42" rx="2" fill="#41a5ee" />
        <path d="M11 13h36v11H11z" fill="#2b7cd3" />
        <path d="M11 24h36v10H11z" fill="#185abd" />
        <path d="M11 34h36v9a2 2 0 0 1-2 2H13a2 2 0 0 1-2-2z" fill="#103f91" />
        <rect y="12" width="24" height="24" rx="2" fill="#1a56be" />
        <SvgText x={12} y={31} size={18}>W</SvgText>
      </AppIcon>
    ),
  },
  {
    name: "24",
    running: true,
    icon: (
      <AppIcon>
        <defs>
          <linearGradient id="ball" x1="1" y1="0" x2="0" y2="1">
            <stop offset="0" stopColor="#00a0f0" />
            <stop offset="1" stopColor="#064b86" />
          </linearGradient>
        </defs>
        <circle cx="24" cy="24" r="24" fill="url(#ball)" />
        <text x="24" y="32" fontSize="23" fill="#fff" textAnchor="middle" fontFamily="Open Sans" fontWeight="600">24</text>
      </AppIcon>
    ),
  },
  {
    name: "23",
    icon: (
      <AppIcon>
        <circle cx="24" cy="24" r="24" fill="url(#ball)" />
        <text x="24" y="34" fontSize="28" fill="#fff" textAnchor="middle" fontFamily="Open Sans" fontWeight="600">23</text>
      </AppIcon>
    ),
  },
  {
    name: "VPN",
    icon: (
      <AppIcon>
        <rect width="48" height="48" fill="#ff7a00" />
        <path d="M33 14l15 13v21H30L17 36z" fill="#f56a14" />
        <g fill="none" stroke="#fff" strokeWidth="1.800">
          <path d="M14 15c5-6 15-6 20 0M17 18c4-4 10-4 14 0" />
          <path d="M18.500 27v-3c0-7 11-7 11 0v3" />
          <rect x="15" y="27" width="18" height="11" />
          <path d="M24 30.500v4" />
        </g>
      </AppIcon>
    ),
  },
  {
    name: "Paint",
    running: true,
    icon: (
      <AppIcon>
        <defs>
          <linearGradient id="palette" x1="0" y1="0" x2="0.500" y2="1">
            <stop offset="0" stopColor="#58dcfb" />
            <stop offset="1" stopColor="#1279d6" />
          </linearGradient>
        </defs>
        <path d="M27 2C12 2 2 15 2 27c0 6 2 10 6 10 5 0 8-6 12-4 3 2-4 8 0 11 5 4 26-1 26-23C46 10 38 2 27 2z" fill="url(#palette)" />
        <circle cx="14" cy="15" r="4" fill="#2c9c1a" />
        <circle cx="25" cy="11" r="4" fill="#f9b90b" />
        <circle cx="9.500" cy="25" r="4" fill="#d1501c" />
        <circle cx="26" cy="27" r="3" fill="#e9f6fd" />
        <path d="M31 15h11l-3 8h-5z" fill="#e6bf90" />
        <path d="M34 22h5v4h-5z" fill="#cfd5da" />
        <path d="M34 26h5l-1 21h-3z" fill="#a75f10" />
      </AppIcon>
    ),
  },
  {
    name: "Broker",
    icon: (
      <AppIcon>
        <rect x="2" y="3" width="43" height="43" rx="4" fill="#9c9c9c" />
        <rect x="2.500" y="3.500" width="40" height="40" rx="3" fill="#fff" />
        <path d="M27 7v1l-8 20 9 12H13V23z" fill="#d81222" />
        <path d="m19 28 9 12H13z" fill="#9c0f19" />
        <circle cx="26" cy="28" r="4.500" fill="#d81222" />
      </AppIcon>
    ),
  },
  {
    name: "Notes",
    icon: (
      <AppIcon>
        <path d="M12 0h30L31 12H18v24H6V6c0-4 2-6 6-6z" fill="#29ea89" />
        <path d="M36 48H6l11-12h13V12h12v30c0 4-2 6-6 6z" fill="#29ea89" />
      </AppIcon>
    ),
  },
  {
    name: "Chrome",
    active: true,
    icon: (
      <AppIcon>
        <path d="M24 24 3.200 12A24 24 0 0 1 44.800 12z" fill="#e33b2e" />
        <path d="M24 24 3.200 12A24 24 0 0 0 24 48l10.400-18z" fill="#259b45" />
        <path d="M24 24h10.400L24 48a24 24 0 0 0 20.800-36H24z" fill="#fcc01a" />
        <circle cx="24" cy="24" r="12" fill="#fff" />
        <circle cx="24" cy="24" r="9.500" fill="#2f7bee" />
      </AppIcon>
    ),
  },
];

const Taskbar = () => (
  <footer className="grid h-24 shrink-0 grid-cols-[1fr_auto_1fr] items-stretch border-t-2 border-[#bdbdbd] bg-[#eeeeee] text-[#171717]">
    <div />
    <div className="flex items-center pr-3 pb-[2px]">
      {apps.map((app) =>
        app.active ? (
          <div key={app.name} className="relative ml-2 flex">
            <span className="absolute top-0 -right-2 h-[77px] w-8 rounded-lg border-2 border-[#e2e2e2] bg-[#f3f3f3]" />
            <button type="button" aria-label={app.name} className="relative flex h-[77px] w-[70px] items-center justify-center rounded-lg border-2 border-[#e5e5e5] bg-[#f8f8f8]">
              {app.icon}
              <TuBadge className="absolute top-[3px] -right-1 size-8 text-[14px]" />
              <span className="absolute bottom-0 h-[6px] w-8 rounded-full bg-[#0078d4]" />
            </button>
          </div>
        ) : (
          <button key={app.name} type="button" aria-label={app.name} className="relative flex h-[77px] w-[88px] items-center justify-center">
            {app.icon}
            {app.running && <span className="absolute bottom-0 h-[6px] w-3 rounded-full bg-[#868686]" />}
          </button>
        )
      )}
    </div>
    <div className="flex items-center justify-end pr-[42px] pb-[2px] font-['Noto_Sans',sans-serif]">
      <button type="button" aria-label="Hidden icons">
        <ChevronUp size={34} strokeWidth={1.5} />
      </button>
      <span className="ml-9 text-[23px]">ENG</span>
      <svg viewBox="0 0 32 26" className="ml-9 h-[26px] w-8" fill="none" stroke="#171717" strokeWidth="2" strokeLinecap="round">
        <path d="M1 10c8-11 22-11 30 0M5.500 14c6-8 15-8 21 0M10 18c3.500-5 8.500-5 12 0" />
        <circle cx="16" cy="22" r="2.500" fill="#171717" stroke="none" />
      </svg>
      <svg viewBox="0 0 32 28" className="ml-4 h-7 w-8" fill="none" stroke="#171717" strokeWidth="2" strokeLinecap="round" strokeLinejoin="round">
        <path d="M1 9v10h5l7 6V3L6 9zM17 10c2 2 2 6 0 8M21 6c4 4 4 12 0 16" />
        <path d="M25 3c6 6 6 16 0 22" stroke="#c4c4c4" />
      </svg>
      <svg viewBox="0 0 32 28" className="ml-4 h-7 w-8" fill="none" stroke="#171717" strokeWidth="2">
        <path d="M16 7h8a3 3 0 0 1 3 3v12a3 3 0 0 1-3 3H3" />
        <path d="M28 12h3v6h-3z" fill="#171717" />
        <path d="M18 11h5v11h-13c5-2 8-6 8-11z" fill="#171717" stroke="none" />
        <path d="M10 0c6 7 6 13 1 18-2 1-5 2-7 2C-1 13 1 7 10 0z" fill="#171717" stroke="none" />
        <path d="M2 24c2-6 6-9 9-15" stroke="#eee" />
      </svg>
      <div className="ml-6 w-[118px] text-right text-[23px] leading-8 whitespace-nowrap">
        <div>8:39 AM</div>
        <div>8/26/2025</div>
      </div>
      <svg viewBox="0 0 28 32" className="ml-[18px] h-8 w-7" aria-label="Notifications">
        <path d="M13 2C7 2 4 6 4 12v7l-3 5v2h24v-2l-3-5v-7c0-6-3-10-9-10zM9 28h8c-1 3-7 3-8 0z" fill="#171717" />
        <path d="M9 11h7l-7 7h7" fill="none" stroke="#eee" strokeWidth="2" />
        <path d="M18 0h10v11H18z" fill="#eee" />
        <path d="M20 2h6l-6 7h6" fill="none" stroke="#171717" strokeWidth="2" />
      </svg>
    </div>
  </footer>
);

const App = () => {
  return (
    <div className="flex h-screen flex-col overflow-hidden bg-[#fcfcfc] font-['Roboto',sans-serif]">
      <div className="shrink-0 bg-[#f4dd75]">
        <TabStrip />
        <Toolbar />
      </div>
      <div className="relative flex min-h-0 flex-1 flex-col">
        <DashboardHeader />
        <div className="flex min-h-0 flex-1 overflow-hidden">
          <Sidebar />
          <Preferences />
          <ScrollBar />
        </div>
        <Toast />
      </div>
      <Taskbar />
    </div>
  );
};

export default App;
